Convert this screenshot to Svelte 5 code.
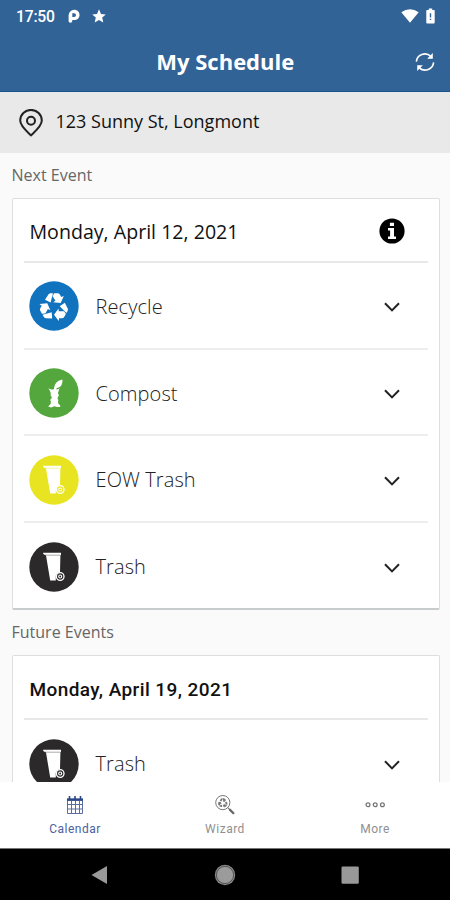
<script>
  const next = [
    { name: 'Recycle', kind: 'recycle', color: '#1172bd' },
    { name: 'Compost', kind: 'compost', color: '#53a73c' },
    { name: 'EOW Trash', kind: 'bin', color: '#e9e421' },
    { name: 'Trash', kind: 'bin', color: '#2b292a' }
  ];
  const future = [{ name: 'Trash', kind: 'bin', color: '#2b292a' }];
</script>

{#snippet arrows()}
  {#each [0, 120, 240] as angle}
    <g transform="rotate({angle})">
      <path d="M-9-7.3L-5.6-12.6Q-4.7-13.8-3.3-13.8H-1L-3.4-4.6Z" />
      <path d="M.1-13.8H3.6Q5-13.8 5.8-12.5L7.3-10L9.8-11.1L6.7-3.9L-.9-4.7L1.4-6.2L-1.3-10.8Z" />
    </g>
  {/each}
{/snippet}

{#snippet row(item)}
  <li class="row">
    <svg class="badge" viewBox="0 0 50 50">
      <circle cx="25" cy="25" r="24.7" fill={item.color} />
      {#if item.kind === 'recycle'}
        <g transform="translate(25 26)" fill="#fff">{@render arrows()}</g>
      {:else if item.kind === 'compost'}
        <path fill="#fff" d="M19.3 20.3Q22 22 24.8 21.3Q25 17 27.2 14.8Q29 12.3 33.5 11.4Q33.8 17.6 29.6 19.6Q27.4 19.9 27.2 21.3Q28.8 21.9 30.5 20.3L29.3 24Q28.2 25 29.6 26.2Q30.3 27.5 29 29Q27.9 30.5 29.3 32Q28.9 34.5 29.2 35.4L31.2 37.5V39H28.2L25.4 38.2L22 39.5L19.2 38.5L21.9 35.5Q21.9 33 21.2 31.7Q23 30.8 22.7 29Q20.8 27.2 21.8 25.5Q21.4 23 19.3 20.3Z" />
      {:else}
        <path fill="#fff" d="M14.2 10.8H32V12.7L31.4 13.4L31 30.2A4.8 4.8 0 0 0 26.8 35.8L26.8 38.6H21.2L17 13.4L14.2 12Z" />
        <path stroke={item.color} stroke-width=".4" d="M16 13.2H31.5" />
        <circle cx="31.2" cy="34.5" r="3.8" fill="none" stroke="#fff" stroke-width="1.3" />
        <circle cx="31.2" cy="34.5" r="1.5" fill="none" stroke="#fff" stroke-width="1.1" />
      {/if}
    </svg>
    <span class="name">{item.name}</span>
    <svg class="chevron" viewBox="0 0 16 10"><path d="M1 1.2L8 8.4L15 1.2" /></svg>
  </li>
{/snippet}

<div class="screen">
  <div class="status">
    <span class="time">17:50</span>
    <svg class="parking" viewBox="0 0 12 15"><path fill="#fff" fill-rule="evenodd" d="M.6 6.4A6 5.8 0 0 1 6.1.8C9.3.8 11.5 2.9 11.5 6C11.5 9.1 9.2 11 6.2 11H4.3V12.1Q4.3 13.8 2.4 13.8Q.6 13.8.6 12ZM4.3 4.2V8H6A2 1.9 0 1 0 6 4.2Z" /></svg>
    <svg class="star" viewBox="0 0 14 14"><path fill="#fff" d="M7 .3L9 5L13.8 5.4L10.2 8.6L11.3 13.5L7 10.9L2.7 13.5L3.8 8.6L.2 5.4L5 5Z" /></svg>
    <span class="grow"></span>
    <svg class="wifi" viewBox="0 0 18 14"><path fill="#fff" d="M.3 3.3Q9-3 17.7 3.3L9 13.8Z" /></svg>
    <svg class="battery" viewBox="0 0 9 16"><path fill="#fff" d="M2.8.6H6.2V2H8Q8.7 2 8.7 2.8V14.5Q8.7 15.4 7.8 15.4H1.2Q.3 15.4.3 14.5V2.8Q.3 2 1.1 2H2.8Z" /><path stroke="#326397" stroke-width="1.4" d="M4.5 5.2V9.5M4.5 10.7V12" /></svg>
  </div>

  <header>
    <h1>My Schedule</h1>
    <svg class="refresh" viewBox="0 0 20 20" fill="none" stroke="#fff" stroke-width="1.6">
      <path d="M1.4 9.6A8.5 8.2 0 0 1 15.7 4.2M18.6 10.4A8.5 8.2 0 0 1 4.3 15.8" />
      <path fill="#fff" stroke="none" d="M17.8 1V6.7H12.2ZM2.2 19V13.3H7.8Z" />
    </svg>
  </header>

  <div class="address">
    <svg class="pin" viewBox="0 0 24 28"><path d="M12 26.4C8 22.5 1.2 17 1.2 11.5A10.8 10.6 0 0 1 22.8 11.5C22.8 17 16 22.5 12 26.4Z" /><circle cx="12" cy="11.7" r="4" /></svg>
    <span>123 Sunny St, Longmont</span>
  </div>

  <main>
    <h2>Next Event</h2>
    <section class="card">
      <div class="date">
        <span>Monday, April 12, 2021</span>
        <svg class="info" viewBox="0 0 26 26"><circle cx="13" cy="13" r="12.6" /><path fill="#fff" d="M10.9 4.7H15V8.1H10.9ZM9 10.1H15V18.4H17V21H9V18.4H11.1V12.6H9Z" /></svg>
      </div>
      <ul>{#each next as item}{@render row(item)}{/each}</ul>
    </section>
    <h2>Future Events</h2>
    <section class="card">
      <div class="date strong"><span>Monday, April 19, 2021</span></div>
      <ul>{#each future as item}{@render row(item)}{/each}</ul>
    </section>
  </main>

  <nav class="tabs">
    <div class="tab active">
      <svg viewBox="0 0 20 20" fill="none" stroke="#5a6ea3" stroke-width="1">
        <path d="M2.5 5H17.5V18.5H2.5ZM2 9.5H18M2 14H18M6.5 6V18.5M10.5 6V18.5M14.5 6V18.5" />
        <path stroke="#2c4789" stroke-width="2.5" d="M2 4.6H18" /><path stroke="#2c4789" stroke-width="1.6" d="M4.5 1V5M10 1V5M15.5 1V5" />
      </svg>
      <span>Calendar</span>
    </div>
    <div class="tab">
      <svg viewBox="0 0 20 20">
        <circle cx="7.8" cy="7.6" r="7.1" fill="none" stroke="#777" />
        <g transform="translate(7.8 8) scale(.34)" fill="#777">{@render arrows()}</g>
        <path stroke="#666" stroke-width="1" d="M12.7 12.5L14.5 14.3" /><path stroke="#666" stroke-width="2.2" stroke-linecap="round" d="M14.8 14.6L18.4 18.2" />
      </svg>
      <span>Wizard</span>
    </div>
    <div class="tab">
      <svg viewBox="0 0 20 20" fill="none" stroke="#777" stroke-width="1.3"><circle cx="3" cy="9.7" r="1.9" /><circle cx="10.2" cy="9.7" r="1.9" /><circle cx="17.4" cy="9.7" r="1.9" /></svg>
      <span>More</span>
    </div>
  </nav>

  <div class="system">
    <svg viewBox="0 0 22 22"><path fill="#999" d="M2.5 11L18 2V20Z" /></svg>
    <svg viewBox="0 0 22 22"><circle cx="11" cy="11" r="10.2" fill="#888" /><circle cx="11" cy="11" r="8.6" fill="#9b9b9b" stroke="#444" stroke-width=".8" /></svg>
    <svg viewBox="0 0 22 22"><rect x="2.5" y="2.5" width="17.3" height="17.3" rx="1.2" fill="#999" /></svg>
  </div>
</div>

<style>
  :global(body) { margin: 0; }
  .screen { width: 450px; height: 900px; display: flex; flex-direction: column; overflow: hidden; background: #fafafa; font-family: 'Open Sans', sans-serif; color: #111; }
  svg { display: block; flex: none; }
  .status { height: 32px; flex: none; display: flex; align-items: center; padding: 0 15px 0 16px; background: #326397; color: #fff; box-sizing: border-box; }
  .time { font: 500 15.7px Roboto, sans-serif; letter-spacing: -.2px; width: 52px; }
  .parking { width: 12px; height: 15px; }
  .star { width: 14px; height: 14px; margin-left: 12px; }
  .grow { flex: 1; }
  .wifi { width: 18px; height: 14px; margin-right: 7px; }
  .battery { width: 9px; height: 16px; }
  header { height: 60px; flex: none; display: flex; align-items: center; justify-content: center; background: #326397; color: #fff; border-bottom: 1px solid #15558c; box-sizing: border-box; padding-left: 36px; }
  h1 { flex: 1; margin: 0 -15px 2px 0; font-size: 22px; font-weight: 700; line-height: 30px; text-align: center; padding-right: 15px; }
  .refresh { width: 20px; height: 20px; margin-right: 15.5px; }
  .address { height: 61px; flex: none; box-sizing: border-box; display: flex; align-items: center; gap: 12.5px; padding: 0 19px 3px; background: #e9e9e9; font-size: 18px; }
  .pin { width: 24px; height: 28px; fill: none; stroke: #222; stroke-width: 2; margin-top: 4px; }
  main { flex: 1; min-height: 0; overflow: hidden; padding: 0 10.5px 0 11.5px; }
  h2 { margin: 0; height: 45px; line-height: 45px; font-size: 16px; font-weight: 400; color: #666; }
  .card { background: #fff; border: 1px solid #dedede; border-bottom: 2px solid #c8cccc; border-radius: 2px; padding: 0 11px; box-sizing: border-box; height: 412px; }
  .date { height: 64px; box-sizing: border-box; border-bottom: 2px solid #e8e8e8; display: flex; justify-content: space-between; align-items: center; padding: 2px 23px 0 6px; font-size: 19.6px; }
  .date.strong { font: 500 19px Roboto, sans-serif; letter-spacing: .41px; padding-top: 5px; }
  .info { width: 26px; height: 26px; }
  ul { list-style: none; margin: 0; padding: 0; }
  .row { height: 86.7px; box-sizing: border-box; display: flex; align-items: center; padding: 2px 28px 0 5px; border-bottom: 2px solid #ededed; }
  .row:last-child { border: 0; padding-bottom: 1px; }
  .badge { width: 50px; height: 50px; margin-right: 17px; }
  .name { flex: 1; font-size: 20px; font-weight: 300; letter-spacing: .1px; color: #222; }
  .chevron { width: 16px; height: 10px; fill: none; stroke: #222; stroke-width: 2; margin-top: 2px; }
  .tabs { flex: none; height: 67px; display: flex; background: #fff; border-bottom: 1px solid #777; box-sizing: border-box; }
  .tab { flex: 1; display: flex; flex-direction: column; align-items: center; padding-top: 13px; color: #909090; font: 400 12px/17px Roboto, sans-serif; letter-spacing: .5px; }
  .tab svg { width: 20px; height: 20px; margin-bottom: 6px; }
  .tab.active { color: #4a61a0; }
  .system { height: 51px; flex: none; background: #000; display: flex; align-items: center; justify-content: center; gap: 103px; }
  .system svg { width: 22px; height: 22px; }
</style>
